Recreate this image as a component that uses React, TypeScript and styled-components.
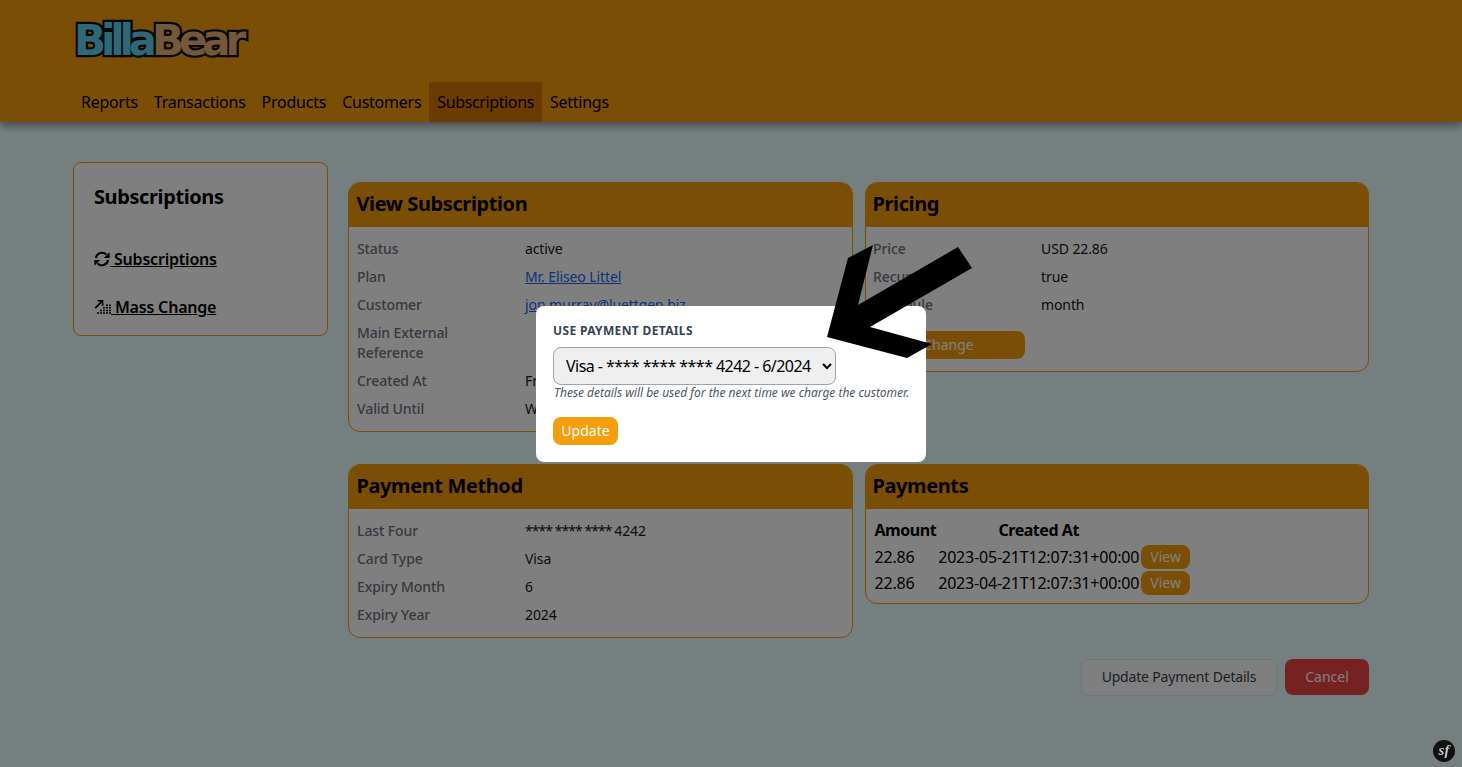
import React from "react";
import styled, { createGlobalStyle } from "styled-components";

const Global = createGlobalStyle`
  html, body { margin: 0; padding: 0; }
  body { background: #ebffff; font-family: "Noto Sans", "Open Sans", sans-serif; color: #000; height: 767px; overflow: hidden; }
  * { box-sizing: border-box; }
`;

const Header = styled.header`
  height: 122px;
  background: #f59e0b;
  box-shadow: 0 4px 8px rgba(0,0,0,.4);
  padding: 0 0 0 73px;
  display: flex;
  flex-direction: column;
  justify-content: space-between;
`;
const Logo = styled.div`
  margin: 20px 0 0 1px;
  font-family: "DejaVu Sans", sans-serif;
  font-weight: 700;
  font-size: 42px;
  line-height: 42px;
  letter-spacing: -5.1px;
  -webkit-text-stroke: 4.5px #111;
  paint-order: stroke fill;
  height: 42px;
`;
const LogoPart = styled.span<{ $c: string }>`
  color: ${p => p.$c};
`;
const Nav = styled.nav`
  display: flex;
  height: 40px;
`;
const NavItem = styled.a<{ $active?: boolean }>`
  font-size: 16px;
  line-height: 40px;
  letter-spacing: ${p => (p.$active ? "-.38px" : "-.245px")};
  padding: 0 8px;
  background: ${p => (p.$active ? "#d97706" : "transparent")};
  color: #000;
`;

const Main = styled.main`
  display: flex;
  padding: 40px 93px 0 73px;
  gap: 20px;
  align-items: flex-start;
`;
const Sidebar = styled.aside`
  width: 255px;
  height: 174px;
  background: #fff;
  border: 1px solid #f59e0b;
  border-radius: 8px;
  padding: 20px;
`;
const SideTitle = styled.h2`
  margin: 0 0 36px;
  font-size: 20px;
  line-height: 28px;
  font-weight: 700;
  letter-spacing: -.4px;
`;
const SideLink = styled.a`
  display: flex;
  align-items: center;
  font-size: 16px;
  line-height: 24px;
  font-weight: 600;
  letter-spacing: -.2px;
  color: #000;
  text-decoration: underline;
  margin-bottom: 24px;
  white-space: pre;
  svg { flex: none; }
`;

const Content = styled.div`
  flex: 1;
  padding-top: 20px;
`;
const CardGrid = styled.div`
  display: grid;
  grid-template-columns: 504.5px 504.5px;
  column-gap: 12px;
  row-gap: 32px;
  align-items: start;
`;
const Card = styled.section`
  background: #fff;
  border: 1px solid #f59e0b;
  border-radius: 12px;
  overflow: hidden;
`;
const CardHead = styled.h3`
  margin: -1px -1px 0;
  height: 45px;
  background: #f59e0b;
  padding: 0 8.5px;
  font-size: 20px;
  line-height: 44px;
  font-weight: 700;
  letter-spacing: -.4px;
`;
const RightHead = styled(CardHead)`
  padding: 0 8px;
`;
const Rows = styled.div`
  padding: 8px 0 8px;
`;
const Row = styled.div<{ $right?: boolean }>`
  display: flex;
  padding: 4px 8px 4px ${p => (p.$right ? "7.5px" : "8px")};
  font-size: 14px;
  line-height: 20px;
`;
const Label = styled.div`
  width: 168px;
  padding-right: 50px;
  font-weight: 500;
  letter-spacing: -.1px;
  color: #6b7280;
`;
const Value = styled.div`
  color: #111827;
  letter-spacing: -.1px;
`;
const Stars = styled.span`
  letter-spacing: -.95px;
`;
const LinkValue = styled.a`
  color: #2563eb;
  text-decoration: underline;
`;
const ChangeBtn = styled.button`
  display: block;
  width: 152px;
  height: 28px;
  margin: 12px 0 4px 7px;
  border: 0;
  border-radius: 8px;
  background: #f59e0b;
  color: #fff;
  font: 14px "Noto Sans", sans-serif;
  padding: 0 0 2px;
`;
const Table = styled.table`
  margin: 7px 0 6px 7px;
  border-spacing: 2px;
  font-size: 16px;
  line-height: 24px;
  th { font-weight: 700; padding: 0; height: 25px; vertical-align: top; letter-spacing: -.45px; }
  td { padding: 0; white-space: nowrap; letter-spacing: -.2px; }
`;
const ViewBtn = styled.button`
  display: block;
  height: 24px;
  width: 49px;
  border: 0;
  border-radius: 8px;
  background: #f59e0b;
  color: #fff;
  font: 14px/24px "Noto Sans", sans-serif;
  padding: 0;
`;
const Actions = styled.div`
  display: flex;
  justify-content: flex-end;
  gap: 8px;
  margin-top: 21px;
`;
const GhostBtn = styled.button`
  height: 37px;
  width: 196px;
  border: 1px solid #e5e7eb;
  border-radius: 8px;
  background: #fff;
  color: #374151;
  font: 400 14px "Noto Sans", sans-serif;
  letter-spacing: -.18px;
  padding: 0 0 2px;
`;
const DangerBtn = styled.button`
  height: 36px;
  width: 84px;
  border: 0;
  border-radius: 8px;
  background: #ef4444;
  color: #fff;
  font: 400 14px "Noto Sans", sans-serif;
  padding: 0 0 2px;
`;

const Overlay = styled.div`
  position: fixed;
  inset: 0;
  background: rgba(0,0,0,.5);
`;
const Modal = styled.div`
  position: fixed;
  left: 536px;
  top: 306px;
  width: 390px;
  height: 156px;
  background: #fff;
  border-radius: 8px;
  padding: 16px 17px;
`;
const ModalLabel = styled.div`
  font-size: 12px;
  line-height: 16px;
  font-weight: 700;
  text-transform: uppercase;
  letter-spacing: .35px;
  color: #374151;
  margin: 1px 0 8px;
`;
const Select = styled.select`
  display: block;
  width: 283px;
  height: 38px;
  border: 1px solid #9ca3af;
  border-radius: 8px;
  background: #efefef;
  color: #000;
  font: 16px "Noto Sans", sans-serif;
  letter-spacing: -.55px;
  padding: 0 0 0 8px;
`;
const Hint = styled.p`
  margin: 0 0 16px;
  padding-left: 1px;
  font-size: 12px;
  line-height: 16px;
  font-style: italic;
  letter-spacing: -.02px;
  white-space: nowrap;
  color: #4b5563;
`;
const UpdateBtn = styled.button`
  display: block;
  width: 65px;
  height: 28px;
  border: 0;
  border-radius: 8px;
  background: #f59e0b;
  color: #fff;
  font: 14px "Noto Sans", sans-serif;
  padding: 0 0 2px;
`;
const Arrow = styled.svg`
  position: fixed;
  left: 0;
  top: 0;
`;
const SfBadge = styled.div`
  position: fixed;
  left: 1433px;
  top: 740px;
  width: 22px;
  height: 22px;
  border-radius: 50%;
  background: #111;
  color: #c4c4c4;
  font: italic 700 15px/20px "Liberation Serif", serif;
  text-align: center;
`;

const SyncIcon = () => (
  <svg width="16" height="16" viewBox="0 0 16 16">
    <g fill="currentColor" stroke="none">
      <path d="M15.6 1.2V7H9.8z" />
      <path d="M0.4 14.8V9H6.2z" />
    </g>
    <g fill="none" stroke="currentColor" strokeWidth="2.1">
      <path d="M1.9 7A6.2 6.2 0 0 1 12.4 3.6" />
      <path d="M14.1 9A6.2 6.2 0 0 1 3.6 12.4" />
    </g>
  </svg>
);
const massDots = [
  [4, 14], [7, 14], [10, 14], [13, 14], [16, 14],
  [7, 11.4], [10, 11.4], [13, 11.4], [16, 11.4],
  [10, 8.8], [13, 8.8], [16, 8.8],
  [13, 6.2], [16, 6.2],
];
const MassIcon = () => (
  <svg width="17" height="16" viewBox="0 0 17 16" fill="currentColor">
    <path d="M0.6 8.6 L6.6 2.6 H3.6 V1 H9.4 V6.8 H7.8 V3.8 L1.8 9.8 Z" />
    {massDots.map(([x, y]) => (
      <circle key={`${x}-${y}`} cx={x} cy={y} r="1" />
    ))}
  </svg>
);

const subRows: [string, React.ReactNode][] = [
  ["Status", "active"],
  ["Plan", <LinkValue>Mr. Eliseo Littel</LinkValue>],
  ["Customer", <LinkValue>jon.murray@luettgen.biz</LinkValue>],
  ["Main External Reference", ""],
  ["Created At", "Fri, 21 Apr 2023"],
  ["Valid Until", "Wed, 21 Jun 2023"],
];
const priceRows = [["Price", "USD 22.86"], ["Recurring", "true"], ["Schedule", "month"]];
const methodRows: [string, React.ReactNode][] = [
  ["Last Four", <><Stars>**** **** **** </Stars>4242</>],
  ["Card Type", "Visa"],
  ["Expiry Month", "6"],
  ["Expiry Year", "2024"],
];

export default function App() {
  return (
    <>
      <Global />
      <Header>
        <Logo><LogoPart $c="#5fd0f0">Billa</LogoPart><LogoPart $c="#e8b078">Bear</LogoPart></Logo>
        <Nav>
          <NavItem>Reports</NavItem>
          <NavItem>Transactions</NavItem>
          <NavItem>Products</NavItem>
          <NavItem>Customers</NavItem>
          <NavItem $active>Subscriptions</NavItem>
          <NavItem>Settings</NavItem>
        </Nav>
      </Header>
      <Main>
        <Sidebar>
          <SideTitle>Subscriptions</SideTitle>
          <SideLink><SyncIcon /> Subscriptions</SideLink>
          <SideLink><MassIcon /> Mass Change</SideLink>
        </Sidebar>
        <Content>
          <CardGrid>
            <Card>
              <CardHead>View Subscription</CardHead>
              <Rows>
                {subRows.map(([l, v]) => (
                  <Row key={l}><Label>{l}</Label><Value>{v}</Value></Row>
                ))}
              </Rows>
            </Card>
            <Card>
              <RightHead>Pricing</RightHead>
              <Rows>
                {priceRows.map(([l, v]) => (
                  <Row $right key={l}><Label>{l}</Label><Value>{v}</Value></Row>
                ))}
                <ChangeBtn>Change</ChangeBtn>
              </Rows>
            </Card>
            <Card>
              <CardHead>Payment Method</CardHead>
              <Rows>
                {methodRows.map(([l, v]) => (
                  <Row key={l}><Label>{l}</Label><Value>{v}</Value></Row>
                ))}
              </Rows>
            </Card>
            <Card>
              <RightHead>Payments</RightHead>
              <Table>
                <thead><tr><th>Amount</th><th>Created At</th><th></th></tr></thead>
                <tbody>
                  <tr><td>22.86</td><td>2023-05-21T12:07:31+00:00</td><td><ViewBtn>View</ViewBtn></td></tr>
                  <tr><td>22.86</td><td>2023-04-21T12:07:31+00:00</td><td><ViewBtn>View</ViewBtn></td></tr>
                </tbody>
              </Table>
            </Card>
          </CardGrid>
          <Actions>
            <GhostBtn>Update Payment Details</GhostBtn>
            <DangerBtn>Cancel</DangerBtn>
          </Actions>
        </Content>
      </Main>
      <Overlay />
      <Modal>
        <ModalLabel>Use Payment Details</ModalLabel>
        <Select defaultValue="v">
          <option value="v">Visa - **** **** **** 4242 - 6/2024</option>
        </Select>
        <Hint>These details will be used for the next time we charge the customer.</Hint>
        <UpdateBtn>Update</UpdateBtn>
      </Modal>
      <Arrow width="1462" height="767" viewBox="0 0 1462 767">
        <polygon points="873,245 848,258 827,337 907,358 932,344 870,327 972,268 958,247 858,305" fill="#000" />
      </Arrow>
      <SfBadge>sf</SfBadge>
    </>
  );
}
